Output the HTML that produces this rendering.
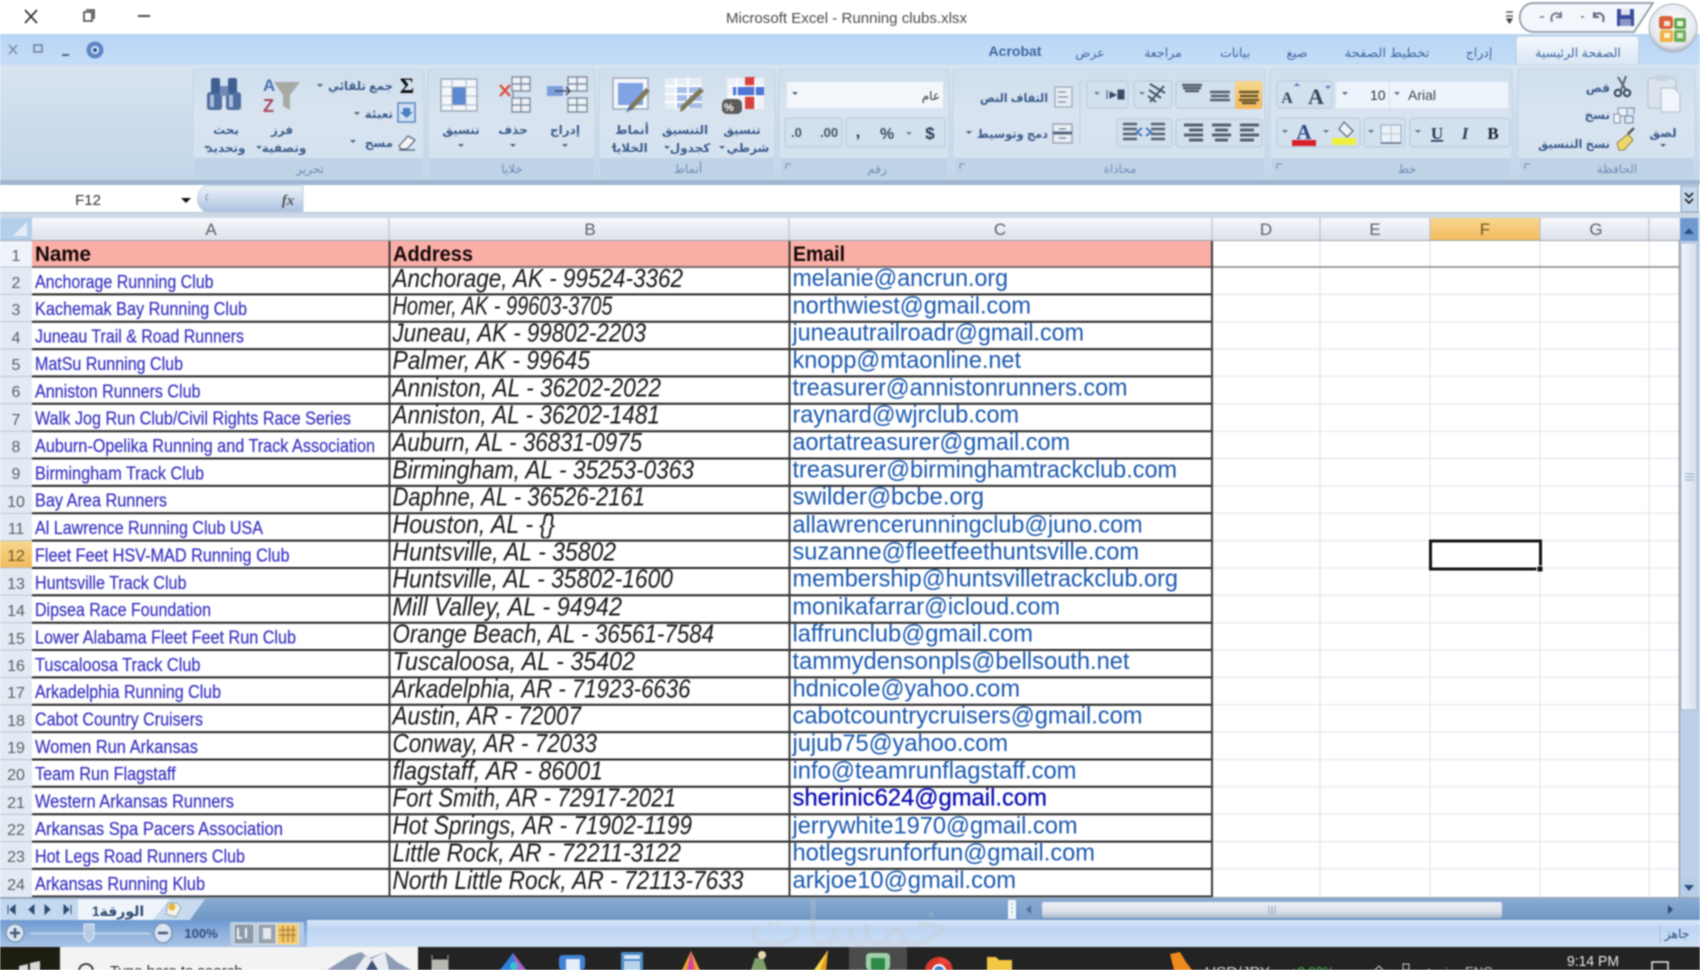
<!DOCTYPE html>
<html><head><meta charset="utf-8"><title>Microsoft Excel - Running clubs.xlsx</title>
<style>
html,body{margin:0;padding:0;background:#fff;width:1700px;height:970px;overflow:hidden}
svg{display:block;filter:blur(.7px)}
text{font-family:"Liberation Sans","DejaVu Sans",sans-serif}
.a{font-size:18.5px;fill:#3732c0;stroke:#3732c0;stroke-width:.2px}
.b{font-size:26px;font-style:italic;fill:#161616}
.c{font-size:24px;fill:#1a58ae}
.h{font-size:21px;font-weight:bold;fill:#120808}
.r{font-size:16px;fill:#5a5f66;text-anchor:middle}
.ch{font-size:17px;fill:#5c6168;text-anchor:middle}
.t{font-size:12px;fill:#3d5d8c;text-anchor:middle;font-weight:bold}
.l{font-size:12px;fill:#3d5d8c;text-anchor:end;font-weight:bold}
.g{font-size:12px;fill:#6f8db4;text-anchor:middle}
.tab{font-size:12.5px;fill:#3f67a0;text-anchor:middle}
.btn{fill:#d3e0ee;stroke:#b6cadf;stroke-width:1}
.grp{fill:url(#grp);stroke:#c2d5e8;stroke-width:1}
.lab{fill:#bfd3e7}
.d{fill:#55606e}
</style></head><body>
<svg width="1700" height="970" viewBox="0 0 1700 970" xmlns="http://www.w3.org/2000/svg">
<defs>
<linearGradient id="rib" x1="0" y1="0" x2="0" y2="1"><stop offset="0" stop-color="#dae4f0"/><stop offset=".5" stop-color="#cbdcec"/><stop offset="1" stop-color="#c3d6e9"/></linearGradient>
<linearGradient id="grp" x1="0" y1="0" x2="0" y2="1"><stop offset="0" stop-color="#cfdeed"/><stop offset=".4" stop-color="#d8e3ef"/><stop offset="1" stop-color="#d3e1f0"/></linearGradient>
<linearGradient id="strip" x1="0" y1="0" x2="0" y2="1"><stop offset="0" stop-color="#b7d5f5"/><stop offset="1" stop-color="#c5ddf7"/></linearGradient>
<linearGradient id="hdr" x1="0" y1="0" x2="0" y2="1"><stop offset="0" stop-color="#f6f8fb"/><stop offset="1" stop-color="#dbe0e8"/></linearGradient>
<linearGradient id="orange" x1="0" y1="0" x2="0" y2="1"><stop offset="0" stop-color="#f8d78e"/><stop offset="1" stop-color="#f3b95c"/></linearGradient>
<linearGradient id="status" x1="0" y1="0" x2="0" y2="1"><stop offset="0" stop-color="#dbe9fa"/><stop offset=".3" stop-color="#bcd5f3"/><stop offset="1" stop-color="#cfe0f6"/></linearGradient>
<linearGradient id="stat2" x1="0" y1="0" x2="0" y2="1"><stop offset="0" stop-color="#6d99d2"/><stop offset=".5" stop-color="#8eb0dc"/><stop offset="1" stop-color="#a9c4e6"/></linearGradient>
<linearGradient id="band" x1="0" y1="0" x2="0" y2="1"><stop offset="0" stop-color="#89acd5"/><stop offset="1" stop-color="#6f96c4"/></linearGradient>
<linearGradient id="thumb" x1="0" y1="0" x2="0" y2="1"><stop offset="0" stop-color="#eef1f6"/><stop offset=".6" stop-color="#d9dfe8"/><stop offset="1" stop-color="#aab8cb"/></linearGradient>
<linearGradient id="vthumb" x1="0" y1="0" x2="1" y2="0"><stop offset="0" stop-color="#f2f5fa"/><stop offset="1" stop-color="#d4e0ef"/></linearGradient>
<linearGradient id="fx" x1="0" y1="0" x2="0" y2="1"><stop offset="0" stop-color="#eef3fa"/><stop offset="1" stop-color="#a9c1df"/></linearGradient>
<linearGradient id="tabg" x1="0" y1="0" x2="0" y2="1"><stop offset="0" stop-color="#f4f8fd"/><stop offset="1" stop-color="#d9e6f4"/></linearGradient>
<radialGradient id="off" cx=".5" cy=".4" r=".6"><stop offset="0" stop-color="#fff"/><stop offset=".8" stop-color="#e4e8ee"/><stop offset="1" stop-color="#a9b2bf"/></radialGradient>
</defs>

<!-- title bar -->
<rect width="1700" height="34" fill="#fff"/>
<path d="M25 10L37 23M37 10L25 23" stroke="#333" stroke-width="1.7" fill="none"/>
<path d="M84 12h8v9h-8zM86 10h8v9" stroke="#444" stroke-width="1.6" fill="none"/>
<path d="M138 16h12" stroke="#333" stroke-width="1.8"/>
<text x="726" y="23" font-size="15" fill="#4a4a4a" textLength="241" lengthAdjust="spacingAndGlyphs">Microsoft Excel - Running clubs.xlsx</text>
<path d="M1506 12h7M1506 16h7M1507 19l2.500 4 2.500-4z" stroke="#444" stroke-width="1.200" fill="#444"/>
<path d="M1534 3H1653L1634 32H1534C1515 32 1515 3 1534 3Z" fill="#f3f6fa" stroke="#8d98a6" stroke-width="1.700"/>
<path d="M1540 17h4M1581 17h3" stroke="#6a7a90" stroke-width="1.600"/>
<path d="M1552 22c-3-9 6-11 9-6M1561 12v5h-5" fill="none" stroke="#6f7d8e" stroke-width="2"/>
<path d="M1603 22c3-9-6-11-9-6M1594 12v5h5" fill="none" stroke="#5a6a80" stroke-width="2"/>
<rect x="1617" y="9" width="17" height="17" fill="#3c4c9e"/><rect x="1621" y="9" width="9" height="6" fill="#dfe4f2"/><rect x="1620" y="19" width="11" height="7" fill="#8d97c6"/>

<!-- tab strip -->
<rect y="34" width="1700" height="31" fill="url(#strip)"/>
<path d="M9 45l8 9M17 45l-8 9" stroke="#7a8aa0" stroke-width="1.500"/>
<rect x="34" y="45" width="8" height="7" fill="none" stroke="#6e7f98" stroke-width="1.500"/>
<path d="M62 55h7" stroke="#55677f" stroke-width="2"/>
<circle cx="95" cy="50" r="8.500" fill="#5d86c4"/><circle cx="95" cy="50" r="4" fill="#dbe6f6"/><circle cx="95" cy="50" r="2" fill="#2b4f90"/>
<path d="M1516 65V40q0-4 4-4H1635q4 0 4 4V65Z" fill="url(#tabg)" stroke="#b3c9e0"/>
<text class="tab" x="1578" y="57">الصفحة الرئيسية</text>
<text class="tab" x="1479" y="57">إدراج</text>
<text class="tab" x="1387" y="57" textLength="85" lengthAdjust="spacingAndGlyphs">تخطيط الصفحة</text>
<text class="tab" x="1297" y="57">صيغ</text>
<text class="tab" x="1235" y="57">بيانات</text>
<text class="tab" x="1163" y="57">مراجعة</text>
<text class="tab" x="1090" y="57">عرض</text>
<text class="tab" x="1015" y="56" style="font-size:14px;font-weight:bold">Acrobat</text>

<!-- office button -->
<circle cx="1673" cy="28" r="24" fill="url(#off)" stroke="#a9b4c2"/>
<rect x="1659" y="16" width="14" height="13" rx="3" fill="#d9603a"/><rect x="1674" y="18" width="12" height="11" rx="2" fill="#5fa64c"/>
<rect x="1660" y="30" width="13" height="12" rx="2" fill="#eeb13e"/><rect x="1674" y="30" width="12" height="12" rx="2" fill="#6fae58"/>
<rect x="1664" y="21" width="6" height="5" fill="#f6e4d4"/><rect x="1677" y="21" width="6" height="5" fill="#e9f3dd"/><rect x="1664" y="33" width="6" height="5" fill="#fbf0cf"/><rect x="1677" y="33" width="6" height="5" fill="#d7ecd2"/>

<!-- ribbon -->
<rect y="65" width="1700" height="115" fill="url(#rib)"/>
<rect y="180" width="1700" height="5" fill="#9fb6cf"/>
<path d="M193 178V72q0-3 3-3H421q3 0 3 3V178Z" class="grp"/><rect class="lab" x="194" y="158" width="229" height="20"/>
<path d="M428 178V72q0-3 3-3H592q3 0 3 3V178Z" class="grp"/><rect class="lab" x="429" y="158" width="165" height="20"/>
<path d="M599 178V72q0-3 3-3H772q3 0 3 3V178Z" class="grp"/><rect class="lab" x="600" y="158" width="174" height="20"/>
<path d="M779 178V72q0-3 3-3H946q3 0 3 3V178Z" class="grp"/><rect class="lab" x="780" y="158" width="168" height="20"/>
<path d="M953 178V72q0-3 3-3H1262q3 0 3 3V178Z" class="grp"/><rect class="lab" x="954" y="158" width="310" height="20"/>
<path d="M1270 178V72q0-3 3-3H1509q3 0 3 3V178Z" class="grp"/><rect class="lab" x="1271" y="158" width="240" height="20"/>
<path d="M1518 178V72q0-3 3-3H1692q3 0 3 3V178Z" class="grp"/><rect class="lab" x="1519" y="158" width="175" height="20"/>

<text class="g" x="310" y="173">تحرير</text><text class="g" x="512" y="173">خلايا</text><text class="g" x="688" y="173">أنماط</text><text class="g" x="877" y="173">رقم</text><text class="g" x="1120" y="173">محاذاة</text><text class="g" x="1407" y="173">خط</text><text class="g" x="1617" y="173">الحافظة</text>
<path d="M786 169v-5h5M960 169v-5h5M1277 169v-5h5M1525 169v-5h5" fill="none" stroke="#7e97b6" stroke-width="1.200"/>

<!-- editing -->
<rect x="207" y="92" width="15" height="18" rx="3" fill="#4f6f9f"/><rect x="226" y="92" width="15" height="18" rx="3" fill="#4f6f9f"/>
<rect x="211" y="78" width="9" height="15" rx="2" fill="#3f5f90"/><rect x="228" y="78" width="9" height="15" rx="2" fill="#3f5f90"/><rect x="220" y="86" width="8" height="10" fill="#6f8cb4"/><rect x="210" y="95" width="4" height="12" fill="#a9c0de"/><rect x="229" y="95" width="4" height="12" fill="#a9c0de"/>
<text x="263" y="91" style="font-size:17px;font-weight:bold;fill:#4b74b2">A</text>
<text x="263" y="112" style="font-size:18px;font-weight:bold;fill:#a84a5c">Z</text>
<path d="M274 82H300L290 95V110L283 106V95Z" fill="#a7aaa4"/>
<text x="407" y="93" text-anchor="middle" style="font:bold 22px 'Liberation Serif',serif;fill:#111">Σ</text>
<text class="l" x="393" y="90" textLength="65" lengthAdjust="spacingAndGlyphs">جمع تلقائي</text><path d="M317 84l6 0-3 3z" fill="#4a5f80"/>
<rect x="398" y="103" width="17" height="19" fill="#cfe0f5" stroke="#5b87c0" stroke-width="1.500"/><path d="M403 108h7v4h3l-6.500 6-6.500-6h3z" fill="#4c7fc0"/>
<text class="l" x="393" y="118">تعبئة</text><path d="M354 112l6 0-3 3z" fill="#4a5f80"/>
<path d="M399 146l9-10 7 4-8 9h-6z" fill="#f4f4f4" stroke="#5d6f85" stroke-width="1.300"/><path d="M399 150h16" stroke="#4c5d73" stroke-width="1.200"/>
<text class="l" x="393" y="147">مسح</text><path d="M350 140l6 0-3 3z" fill="#4a5f80"/>
<text class="t" x="226" y="134">بحث</text><text class="t" x="226" y="152">وتحديد</text><path d="M204 146l6 0-3 3z" fill="#4a5f80"/>
<text class="t" x="282" y="134">فرز</text><text class="t" x="284" y="152">وتصفية</text><path d="M256 146l6 0-3 3z" fill="#4a5f80"/>

<!-- cells -->
<rect x="441" y="79" width="36" height="32" fill="#f3f6fa" stroke="#9aa9bb" stroke-width="1.500"/><rect x="452" y="87" width="14" height="18" fill="#5c88d0"/><path d="M441 87h36M441 96h11M466 96h11M441 105h36M452 79v32M466 79v32" stroke="#aab6c5"/>
<path d="M512 77h18v14h-18zM512 98h18v14h-18zM521 77v14M521 98v14M512 84h18M512 105h18M513 91v7" fill="#eef2f7" stroke="#7e8ea2" stroke-width="1.400"/><path d="M500 85l10 11M510 85l-10 11" stroke="#d8503d" stroke-width="2.400"/>
<path d="M568 77h19v14h-19zM568 98h19v14h-19zM577 77v14M577 98v14M568 84h19M568 105h19" fill="#eef2f7" stroke="#7e8ea2" stroke-width="1.400"/><rect x="547" y="86" width="16" height="10" fill="#7b9fdc"/><path d="M555 91h15m-4-4l4 4-4 4" stroke="#3c4c60" stroke-width="1.500" fill="none"/>
<text class="t" x="461" y="134">تنسيق</text><text class="t" x="513" y="134">حذف</text><text class="t" x="565" y="134">إدراج</text>
<path d="M458 144l6 0-3 3zM510 144l6 0-3 3zM562 144l6 0-3 3z" fill="#4a5f80"/>

<!-- styles -->
<rect x="613" y="78" width="35" height="31" fill="#f4f6f9" stroke="#9aa9bb" stroke-width="1.500"/><rect x="618" y="83" width="25" height="22" fill="#7fa3e6"/><path d="M650 91L632 110l-4 1 1-5 17-18z" fill="#7f7a5a"/><path d="M632 108l-6 5 3-7z" fill="#4e6ab8"/>
<rect x="665" y="78" width="37" height="31" fill="#e6edf7"/><rect x="676" y="86" width="26" height="22" fill="#a4bde8"/><path d="M665 86h37M665 94h37M665 102h37M676 78v31M688 78v31" stroke="#fff" stroke-width="2"/><path d="M704 91L684 110l-4 2 1-6 19-18z" fill="#7f7a5a"/>
<rect x="727" y="78" width="37" height="31" fill="#eef2f8"/><rect x="745" y="77" width="10" height="32" fill="#d8413b"/><rect x="733" y="87" width="31" height="9" fill="#4d76d6"/><path d="M727 86h37M727 96h37M737 78v31M755 78v31" stroke="#fff" stroke-width="1.500"/><rect x="722" y="99" width="20" height="15" rx="5" fill="#5b5b5b"/><text x="724" y="111" style="font-size:11px;font-weight:bold;fill:#fff">%</text>
<text class="t" x="632" y="134">أنماط</text><text class="t" x="630" y="152">الخلايا</text><path d="M611 146l6 0-3 3z" fill="#4a5f80"/>
<text class="t" x="685" y="134">التنسيق</text><text class="t" x="690" y="152">كجدول</text><path d="M664 146l6 0-3 3z" fill="#4a5f80"/>
<text class="t" x="742" y="134">تنسيق</text><text class="t" x="748" y="152">شرطي</text><path d="M719 146l6 0-3 3z" fill="#4a5f80"/>

<!-- number -->
<rect x="787" y="82" width="156" height="26" fill="#f3f7fc"/><path d="M792 92l6 0-3 3z" fill="#4a5f80"/>
<text class="l" x="940" y="100" style="fill:#333;font-weight:normal">عام</text>
<rect class="btn" x="785" y="118" width="57" height="29" rx="3"/><rect class="btn" x="846" y="118" width="99" height="29" rx="3"/>
<text x="791" y="137" style="font-size:13px;font-weight:bold;fill:#456">.0</text><text x="820" y="137" style="font-size:13px;font-weight:bold;fill:#456">.00</text>
<text x="858" y="137" text-anchor="middle" style="font-size:17px;font-weight:bold;fill:#2d3e55">,</text>
<text x="887" y="139" text-anchor="middle" style="font-size:16px;font-weight:bold;fill:#3a4d66">%</text>
<text x="930" y="139" text-anchor="middle" style="font-size:17px;font-weight:bold;fill:#2d3e55">$</text><path d="M906 132l6 0-3 3z" fill="#6a7f9c"/>

<!-- alignment -->
<text class="l" x="1048" y="102" textLength="68" lengthAdjust="spacingAndGlyphs">التفاف النص</text>
<rect x="1055" y="87" width="17" height="20" fill="#e8edf3" stroke="#97a6b8" stroke-width="1.200"/><path d="M1058 92h8M1058 97h10M1058 102h8" stroke="#6a7a8d"/>
<text class="l" x="1048" y="138" textLength="71" lengthAdjust="spacingAndGlyphs">دمج وتوسيط</text><path d="M966 131l6 0-3 3z" fill="#4a5f80"/>
<rect x="1053" y="124" width="19" height="19" fill="#e8edf3" stroke="#8b9aad" stroke-width="1.200"/><path d="M1053 133h19" stroke="#56677d" stroke-width="3"/><path d="M1059 129h7M1059 138h7" stroke="#56677d"/>
<path d="M1080 80V146" stroke="#bcd0e4"/>
<rect class="btn" x="1087" y="81" width="41" height="27" rx="3"/><rect class="btn" x="1134" y="81" width="38" height="27" rx="3"/><rect class="btn" x="1176" y="81" width="86" height="27" rx="3"/>
<rect class="btn" x="1117" y="119" width="55" height="28" rx="3"/><rect class="btn" x="1176" y="119" width="86" height="28" rx="3"/>
<rect x="1235" y="81" width="27" height="28" rx="2" fill="url(#orange)"/>
<path d="M1094 92l6 0-3 3z" fill="#6a7f9c"/><path d="M1107 90v9M1110 92l6 3-6 3zM1118 90h6v9h-6z" fill="#3a4d66" stroke="#3a4d66"/>
<path d="M1139 92l6 0-3 3z" fill="#6a7f9c"/><path d="M1150 84l15 9M1149 90l12 8M1148 96l8 6M1150 102l14-16" stroke="#46566a" stroke-width="2" fill="none"/>
<path d="M1182 85h20M1183 88h18M1185 91h14" stroke="#55606e" stroke-width="2.500"/>
<path d="M1210 92h20M1211 96h18M1210 100h20" stroke="#55606e" stroke-width="2.500"/>
<path d="M1239 92h20M1240 96h18M1239 100h20M1242 103h14" stroke="#6b5a2e" stroke-width="2.500"/>
<path d="M1123 124h14M1123 129h14M1123 134h14M1123 139h14M1151 124h14M1151 129h14M1151 134h14M1151 139h14" stroke="#55606e" stroke-width="2.500"/>
<path d="M1142 128l-5 4 5 4" fill="none" stroke="#3f76c4" stroke-width="2"/><path d="M1146 128l5 4-5 4" fill="none" stroke="#3f76c4" stroke-width="2"/>
<path d="M1184 125h19M1189 130h14M1184 135h19M1189 140h14" stroke="#55606e" stroke-width="3"/>
<path d="M1212 125h19M1215 130h13M1212 135h19M1215 140h13" stroke="#55606e" stroke-width="3"/>
<path d="M1240 125h19M1240 130h14M1240 135h19M1240 140h14" stroke="#55606e" stroke-width="3"/>

<!-- font -->
<rect class="btn" x="1277" y="81" width="55" height="27" rx="3"/>
<text x="1287" y="103" text-anchor="middle" style="font:bold 16px 'Liberation Serif',serif;fill:#33465f">A</text><path d="M1294 86l3-3 3 3z" fill="#4f79b8"/>
<text x="1316" y="104" text-anchor="middle" style="font:bold 22px 'Liberation Serif',serif;fill:#33465f">A</text><path d="M1325 86l3 3 3-3z" fill="#4f79b8"/>
<rect x="1336" y="82" width="53" height="26" fill="#eef4fb"/><rect x="1390" y="82" width="118" height="26" fill="#eef4fb"/>
<path d="M1342 92l6 0-3 3zM1394 92l6 0-3 3z" fill="#556a88"/>
<text x="1370" y="100" style="font-size:14px;fill:#333">10</text><text x="1408" y="100" style="font-size:14px;fill:#3d4652" textLength="28" lengthAdjust="spacingAndGlyphs">Arial</text>
<rect class="btn" x="1277" y="118" width="83" height="29" rx="3"/><rect class="btn" x="1364" y="118" width="41" height="29" rx="3"/><rect class="btn" x="1410" y="118" width="100" height="29" rx="3"/>
<path d="M1282 130l6 0-3 3zM1323 130l6 0-3 3zM1368 130l6 0-3 3zM1415 130l6 0-3 3z" fill="#5f748f"/>
<text x="1304" y="139" text-anchor="middle" style="font:bold 21px 'Liberation Serif',serif;fill:#2c4a86">A</text><rect x="1292" y="140" width="24" height="6" fill="#d6202b"/>
<path d="M1344 122l9 9-6 6-8-8z" fill="#eef1f5" stroke="#5f6e80" stroke-width="1.300"/><rect x="1332" y="138" width="24" height="7" fill="#f1ef3c"/>
<rect x="1381" y="125" width="20" height="18" fill="#eaf0f7" stroke="#96a6ba"/><path d="M1391 125v18M1381 134h20" stroke="#b8c5d5"/><path d="M1381 143h20" stroke="#596a80" stroke-width="1.500"/>
<text x="1437" y="139" text-anchor="middle" style="font:bold 17px 'Liberation Serif',serif;fill:#2a3c57;text-decoration:underline">U</text>
<text x="1465" y="139" text-anchor="middle" style="font:italic bold 17px 'Liberation Serif',serif;fill:#2a3c57">I</text>
<text x="1493" y="139" text-anchor="middle" style="font:bold 17px 'Liberation Serif',serif;fill:#18212e">B</text>

<!-- clipboard -->
<rect x="1648" y="78" width="28" height="30" rx="3" fill="#dbe4ee" stroke="#b7c4d3" stroke-width="1.300"/><rect x="1655" y="75" width="14" height="6" rx="2" fill="#c9d4e0"/><path d="M1661 88h13l6 6v18h-19z" fill="#f1f5f9" stroke="#b9c6d5" stroke-width="1.300"/>
<text class="t" x="1663" y="137">لصق</text><path d="M1660 144l6 0-3 3z" fill="#4a5f80"/>
<path d="M1618 77l8 13M1626 76l-5 14" stroke="#5c6675" stroke-width="2"/><circle cx="1618" cy="93" r="3.200" fill="none" stroke="#33435c" stroke-width="2"/><circle cx="1627" cy="93" r="3.200" fill="none" stroke="#33435c" stroke-width="2"/>
<text class="l" x="1610" y="92">قص</text>
<path d="M1618 108h9v8h-9z" fill="#e8eef7" stroke="#7d8ea5"/><path d="M1625 116h8v7h-8zM1628 108h6v6" fill="#dde8f5" stroke="#5e7fa9"/><path d="M1614 114h6v9h-6z" fill="#eef3f9" stroke="#7c8ea6"/>
<text class="l" x="1610" y="119">نسخ</text>
<path d="M1617 143l11-9 5 6-9 10h-5z" fill="#ecd76c" stroke="#8b8042"/><path d="M1628 134l6-6" stroke="#555" stroke-width="2.500"/>
<text class="l" x="1610" y="148" textLength="72" lengthAdjust="spacingAndGlyphs">نسخ التنسيق</text>

<!-- formula bar -->
<rect y="185" width="1700" height="27" fill="#fff"/><rect y="212" width="1700" height="6" fill="#cdd9e6"/><path d="M0 212.500H1700" stroke="#b4c4d6"/>
<text x="88" y="205" text-anchor="middle" style="font-size:15px;fill:#333">F12</text>
<path d="M181 198h10l-5 5z" fill="#111"/>
<path d="M205 186H303V212H205C195 205 195 192 205 186Z" fill="url(#fx)" stroke="#c2cfdf"/>
<text x="288" y="205" text-anchor="middle" style="font:italic bold 15px 'Liberation Serif',serif;fill:#555">fx</text>
<path d="M208 194q-4 3 0 7" fill="none" stroke="#8ea0b6" stroke-width="1.200"/>
<rect x="1681" y="186" width="17" height="26" fill="#c6d8eb" stroke="#8ba4c0"/><path d="M1685 193l4 4 4-4M1685 199l4 4 4-4" fill="none" stroke="#222" stroke-width="1.600"/>

<!-- sheet header -->
<rect y="218" width="1680" height="23" fill="url(#hdr)"/>
<rect y="218" width="32" height="23" fill="#b4cfec"/><path d="M27 222V236H13Z" fill="#e3edf8"/>
<rect x="1430" y="218" width="110" height="23" fill="url(#orange)"/>
<path d="M389 218v23M789 218v23M1212 218v23M1320 218v23M1430 218v23M1540 218v23M1649 218v23" stroke="#b6bcc6"/>
<path d="M0 240.500H1680" stroke="#9aa5b2"/>
<text class="ch" x="211" y="235">A</text><text class="ch" x="590" y="235">B</text><text class="ch" x="1000" y="235">C</text><text class="ch" x="1266" y="235">D</text><text class="ch" x="1375" y="235">E</text><text class="ch" x="1485" y="235" style="fill:#6b5a2c">F</text><text class="ch" x="1596" y="235">G</text>

<!-- row header -->
<rect y="241" width="32" height="656" fill="#e3eaf3"/>
<rect y="241" width="32" height="26" fill="#eef3f9"/>
<rect y="540.600" width="32" height="27.400" fill="url(#orange)"/>
<path d="M0 267H32M0 294.400H32M0 321.700H32M0 349.100H32M0 376.400H32M0 403.800H32M0 431.200H32M0 458.500H32M0 485.900H32M0 513.200H32M0 540.600H32M0 568H32M0 595.300H32M0 622.700H32M0 650H32M0 677.400H32M0 704.800H32M0 732.100H32M0 759.500H32M0 786.800H32M0 814.200H32M0 841.600H32M0 868.900H32" stroke="#b9c5d4"/>
<text class="r" x="16" y="261">1</text><text class="r" x="16" y="288">2</text><text class="r" x="16" y="315">3</text><text class="r" x="16" y="343">4</text><text class="r" x="16" y="370">5</text><text class="r" x="16" y="397">6</text><text class="r" x="16" y="425">7</text><text class="r" x="16" y="452">8</text><text class="r" x="16" y="479">9</text><text class="r" x="16" y="507">10</text><text class="r" x="16" y="534">11</text><text class="r" x="16" y="561" style="fill:#6b5a2c">12</text><text class="r" x="16" y="589">13</text><text class="r" x="16" y="616">14</text><text class="r" x="16" y="644">15</text><text class="r" x="16" y="671">16</text><text class="r" x="16" y="698">17</text><text class="r" x="16" y="726">18</text><text class="r" x="16" y="753">19</text><text class="r" x="16" y="780">20</text><text class="r" x="16" y="808">21</text><text class="r" x="16" y="835">22</text><text class="r" x="16" y="862">23</text><text class="r" x="16" y="890">24</text>

<!-- grid -->
<rect x="32" y="241" width="1180" height="26" fill="#fbaea6"/>
<path d="M1320 241V897M1430 241V897M1540 241V897M1649 241V897" stroke="#dfe2e8"/>
<path d="M1212 294.400H1680M1212 321.700H1680M1212 349.100H1680M1212 376.400H1680M1212 403.800H1680M1212 431.200H1680M1212 458.500H1680M1212 485.900H1680M1212 513.200H1680M1212 540.600H1680M1212 568H1680M1212 595.300H1680M1212 622.700H1680M1212 650H1680M1212 677.400H1680M1212 704.800H1680M1212 732.100H1680M1212 759.500H1680M1212 786.800H1680M1212 814.200H1680M1212 841.600H1680M1212 868.900H1680" stroke="#e0e3e9"/>
<path d="M1212 267H1680" stroke="#a59c9c" stroke-width="2"/>
<path d="M32 267H1212" stroke="#7a6a6a" stroke-width="2"/>
<path d="M32 294.400H1212M32 321.700H1212M32 349.100H1212M32 376.400H1212M32 403.800H1212M32 431.200H1212M32 458.500H1212M32 485.900H1212M32 513.200H1212M32 540.600H1212M32 568H1212M32 595.300H1212M32 622.700H1212M32 650H1212M32 677.400H1212M32 704.800H1212M32 732.100H1212M32 759.500H1212M32 786.800H1212M32 814.200H1212M32 841.600H1212M32 868.900H1212M32 896.500H1212" stroke="#222" stroke-width="2"/>
<path d="M389.500 241V897M789.500 241V897M1212 241V897" stroke="#3a3a3a" stroke-width="2"/>
<path d="M1679.500 241V897" stroke="#8a94a0" stroke-width="1.500"/>

<text class="h" x="35" y="261" textLength="56" lengthAdjust="spacingAndGlyphs">Name</text><text class="h" x="393" y="261" textLength="80" lengthAdjust="spacingAndGlyphs">Address</text><text class="h" x="793" y="261" textLength="52" lengthAdjust="spacingAndGlyphs">Email</text>

<text class="a" x="35" y="288" textLength="178.500" lengthAdjust="spacingAndGlyphs">Anchorage Running Club</text>
<text class="a" x="35" y="315" textLength="212" lengthAdjust="spacingAndGlyphs">Kachemak Bay Running Club</text>
<text class="a" x="35" y="342.600" textLength="209" lengthAdjust="spacingAndGlyphs">Juneau Trail &amp; Road Runners</text>
<text class="a" x="35" y="370" textLength="148" lengthAdjust="spacingAndGlyphs">MatSu Running Club</text>
<text class="a" x="35" y="397.300" textLength="165.500" lengthAdjust="spacingAndGlyphs">Anniston Runners Club</text>
<text class="a" x="35" y="424.700" textLength="316" lengthAdjust="spacingAndGlyphs">Walk Jog Run Club/Civil Rights Race Series</text>
<text class="a" x="35" y="452" textLength="340" lengthAdjust="spacingAndGlyphs">Auburn-Opelika Running and Track Association</text>
<text class="a" x="35" y="479.400" textLength="169" lengthAdjust="spacingAndGlyphs">Birmingham Track Club</text>
<text class="a" x="35" y="506.700" textLength="132" lengthAdjust="spacingAndGlyphs">Bay Area Runners</text>
<text class="a" x="35" y="534" textLength="228" lengthAdjust="spacingAndGlyphs">Al Lawrence Running Club USA</text>
<text class="a" x="35" y="561.500" textLength="254.500" lengthAdjust="spacingAndGlyphs">Fleet Feet HSV-MAD Running Club</text>
<text class="a" x="35" y="588.800" textLength="151.500" lengthAdjust="spacingAndGlyphs">Huntsville Track Club</text>
<text class="a" x="35" y="616" textLength="176" lengthAdjust="spacingAndGlyphs">Dipsea Race Foundation</text>
<text class="a" x="35" y="643.500" textLength="261" lengthAdjust="spacingAndGlyphs">Lower Alabama Fleet Feet Run Club</text>
<text class="a" x="35" y="671" textLength="165.500" lengthAdjust="spacingAndGlyphs">Tuscaloosa Track Club</text>
<text class="a" x="35" y="698" textLength="186" lengthAdjust="spacingAndGlyphs">Arkadelphia Running Club</text>
<text class="a" x="35" y="725.600" textLength="168" lengthAdjust="spacingAndGlyphs">Cabot Country Cruisers</text>
<text class="a" x="35" y="753" textLength="163" lengthAdjust="spacingAndGlyphs">Women Run Arkansas</text>
<text class="a" x="35" y="780" textLength="140.600" lengthAdjust="spacingAndGlyphs">Team Run Flagstaff</text>
<text class="a" x="35" y="807.700" textLength="199" lengthAdjust="spacingAndGlyphs">Western Arkansas Runners</text>
<text class="a" x="35" y="835" textLength="248" lengthAdjust="spacingAndGlyphs">Arkansas Spa Pacers Association</text>
<text class="a" x="35" y="862.400" textLength="210" lengthAdjust="spacingAndGlyphs">Hot Legs Road Runners Club</text>
<text class="a" x="35" y="889.800" textLength="170" lengthAdjust="spacingAndGlyphs">Arkansas Running Klub</text>

<g transform="translate(0,.6)">
<text class="b" x="392.500" y="286.400" textLength="290.500" lengthAdjust="spacingAndGlyphs">Anchorage, AK - 99524-3362</text>
<text class="b" x="392.500" y="313.700" textLength="220" lengthAdjust="spacingAndGlyphs">Homer, AK - 99603-3705</text>
<text class="b" x="392.500" y="341" textLength="253.500" lengthAdjust="spacingAndGlyphs">Juneau, AK - 99802-2203</text>
<text class="b" x="392.500" y="368.400" textLength="197.500" lengthAdjust="spacingAndGlyphs">Palmer, AK - 99645</text>
<text class="b" x="392.500" y="395.800" textLength="268.500" lengthAdjust="spacingAndGlyphs">Anniston, AL - 36202-2022</text>
<text class="b" x="392.500" y="423" textLength="267.500" lengthAdjust="spacingAndGlyphs">Anniston, AL - 36202-1481</text>
<text class="b" x="392.500" y="450.500" textLength="249.500" lengthAdjust="spacingAndGlyphs">Auburn, AL - 36831-0975</text>
<text class="b" x="392.500" y="478" textLength="301.500" lengthAdjust="spacingAndGlyphs">Birmingham, AL - 35253-0363</text>
<text class="b" x="392.500" y="505" textLength="252.500" lengthAdjust="spacingAndGlyphs">Daphne, AL - 36526-2161</text>
<text class="b" x="392.500" y="532.600" textLength="162.500" lengthAdjust="spacingAndGlyphs">Houston, AL - {}</text>
<text class="b" x="392.500" y="560" textLength="223.500" lengthAdjust="spacingAndGlyphs">Huntsville, AL - 35802</text>
<text class="b" x="392.500" y="587" textLength="280.500" lengthAdjust="spacingAndGlyphs">Huntsville, AL - 35802-1600</text>
<text class="b" x="392.500" y="614.700" textLength="229.500" lengthAdjust="spacingAndGlyphs">Mill Valley, AL - 94942</text>
<text class="b" x="392.500" y="642" textLength="321.500" lengthAdjust="spacingAndGlyphs">Orange Beach, AL - 36561-7584</text>
<text class="b" x="392.500" y="669.400" textLength="242.500" lengthAdjust="spacingAndGlyphs">Tuscaloosa, AL - 35402</text>
<text class="b" x="392.500" y="696.800" textLength="298" lengthAdjust="spacingAndGlyphs">Arkadelphia, AR - 71923-6636</text>
<text class="b" x="392.500" y="724" textLength="188.500" lengthAdjust="spacingAndGlyphs">Austin, AR - 72007</text>
<text class="b" x="392.500" y="751.500" textLength="204.500" lengthAdjust="spacingAndGlyphs">Conway, AR - 72033</text>
<text class="b" x="392.500" y="778.800" textLength="210.500" lengthAdjust="spacingAndGlyphs">flagstaff, AR - 86001</text>
<text class="b" x="392.500" y="806" textLength="283.500" lengthAdjust="spacingAndGlyphs">Fort Smith, AR - 72917-2021</text>
<text class="b" x="392.500" y="833.600" textLength="299.500" lengthAdjust="spacingAndGlyphs">Hot Springs, AR - 71902-1199</text>
<text class="b" x="392.500" y="861" textLength="288.500" lengthAdjust="spacingAndGlyphs">Little Rock, AR - 72211-3122</text>
<text class="b" x="392.500" y="888.300" textLength="351" lengthAdjust="spacingAndGlyphs">North Little Rock, AR - 72113-7633</text>
</g>

<g transform="translate(0,.7)">
<text class="c" x="792.500" y="285.400" textLength="215.500" lengthAdjust="spacingAndGlyphs">melanie@ancrun.org</text>
<text class="c" x="792.500" y="312.700" textLength="238.500" lengthAdjust="spacingAndGlyphs">northwiest@gmail.com</text>
<text class="c" x="792.500" y="340" textLength="291.500" lengthAdjust="spacingAndGlyphs">juneautrailroadr@gmail.com</text>
<text class="c" x="792.500" y="367.400" textLength="228.500" lengthAdjust="spacingAndGlyphs">knopp@mtaonline.net</text>
<text class="c" x="792.500" y="394.800" textLength="335" lengthAdjust="spacingAndGlyphs">treasurer@annistonrunners.com</text>
<text class="c" x="792.500" y="422" textLength="226.500" lengthAdjust="spacingAndGlyphs">raynard@wjrclub.com</text>
<text class="c" x="792.500" y="449.500" textLength="277.500" lengthAdjust="spacingAndGlyphs">aortatreasurer@gmail.com</text>
<text class="c" x="792.500" y="477" textLength="384.500" lengthAdjust="spacingAndGlyphs">treasurer@birminghamtrackclub.com</text>
<text class="c" x="792.500" y="504" textLength="191.500" lengthAdjust="spacingAndGlyphs">swilder@bcbe.org</text>
<text class="c" x="792.500" y="531.600" textLength="350" lengthAdjust="spacingAndGlyphs">allawrencerunningclub@juno.com</text>
<text class="c" x="792.500" y="559" textLength="346.500" lengthAdjust="spacingAndGlyphs">suzanne@fleetfeethuntsville.com</text>
<text class="c" x="792.500" y="586" textLength="385.500" lengthAdjust="spacingAndGlyphs">membership@huntsvilletrackclub.org</text>
<text class="c" x="792.500" y="613.700" textLength="267.500" lengthAdjust="spacingAndGlyphs">monikafarrar@icloud.com</text>
<text class="c" x="792.500" y="641" textLength="240.500" lengthAdjust="spacingAndGlyphs">laffrunclub@gmail.com</text>
<text class="c" x="792.500" y="668.400" textLength="337" lengthAdjust="spacingAndGlyphs">tammydensonpls@bellsouth.net</text>
<text class="c" x="792.500" y="695.800" textLength="227.500" lengthAdjust="spacingAndGlyphs">hdnicole@yahoo.com</text>
<text class="c" x="792.500" y="723" textLength="350" lengthAdjust="spacingAndGlyphs">cabotcountrycruisers@gmail.com</text>
<text class="c" x="792.500" y="750.500" textLength="215.500" lengthAdjust="spacingAndGlyphs">jujub75@yahoo.com</text>
<text class="c" x="792.500" y="777.800" textLength="284" lengthAdjust="spacingAndGlyphs">info@teamrunflagstaff.com</text>
<text class="c" x="792.500" y="805" textLength="254.500" lengthAdjust="spacingAndGlyphs" style="fill:#0c0cb4;stroke:#0c0cb4;stroke-width:.3px">sherinic624@gmail.com</text>
<text class="c" x="792.500" y="832.600" textLength="285" lengthAdjust="spacingAndGlyphs">jerrywhite1970@gmail.com</text>
<text class="c" x="792.500" y="860" textLength="302.500" lengthAdjust="spacingAndGlyphs">hotlegsrunforfun@gmail.com</text>
<text class="c" x="792.500" y="887.300" textLength="223.500" lengthAdjust="spacingAndGlyphs">arkjoe10@gmail.com</text>
</g>

<!-- active cell -->
<rect x="1430.500" y="541" width="110" height="28" fill="none" stroke="#111" stroke-width="3"/><rect x="1537" y="566" width="6" height="6" fill="#111" stroke="#fff"/>

<!-- v scrollbar -->
<rect x="1680" y="218" width="20" height="681" fill="#bcd1e8"/>
<rect x="1680" y="218" width="18" height="23" fill="#6f9ad0"/><path d="M1684 234l5-6 5 6z" fill="#2a4f85"/>
<rect x="1681" y="243" width="16" height="467" fill="url(#vthumb)" stroke="#a3b9d2"/><path d="M1685 474h9M1685 477h9M1685 480h9" stroke="#99aac0"/>
<rect x="1680" y="878" width="18" height="20" fill="#b7cde6"/><path d="M1684 885l5 6 5-6z" fill="#2a4f85"/>

<!-- sheet tabs band -->
<rect y="897" width="1700" height="23" fill="url(#band)"/>
<path d="M0 898H1700" stroke="#9aa6b4" stroke-width="1.500"/>
<rect y="899" width="78" height="21" fill="#c4d9f0"/>
<path d="M8 905v9M15 905l-5 4.500 5 4.500zM34 905l-5 4.500 5 4.500zM45 905l5 4.500-5 4.500zM64 905l5 4.500-5 4.500zM71 905v9" fill="#2e4a72" stroke="#2e4a72"/>
<path d="M78 899H170L153 920H78Z" fill="#eff4fb"/>
<text x="118" y="916" text-anchor="middle" style="font-size:14px;font-weight:bold;fill:#2e4a72">الورقة1</text>
<path d="M170 899H205L190 920H153Z" fill="#c7daef"/>
<path d="M168 903l9 0 4 5-5 9-10-3z" fill="#f7f3e4" stroke="#91a4ba"/><circle cx="172" cy="907" r="3.500" fill="#e5b43c"/>
<rect x="1008" y="900" width="8" height="19" fill="#f2f6fb"/><path d="M1012 903v13" stroke="#8ca2bd" stroke-dasharray="2 2"/>
<path d="M1031 905l-5 4.500 5 4.500z" fill="#2e4a72"/><rect x="1020" y="900" width="20" height="19" fill="#89a8cc" opacity=".4"/>
<rect x="1042" y="902" width="460" height="16" rx="2" fill="url(#thumb)"/><path d="M1269 906v8M1272 906v8M1275 906v8" stroke="#93a4ba"/>
<path d="M1668 905l5 4.500-5 4.500z" fill="#2e4a72"/>

<!-- status bar -->
<rect y="920" width="1700" height="27" fill="url(#status)"/>
<rect y="920" width="307" height="27" fill="url(#stat2)"/>
<path d="M30 933.500H150" stroke="#cbdcf0" stroke-width="1.500"/>
<circle cx="15" cy="933" r="9" fill="#d9e5f3" stroke="#7d94b2" stroke-width="1.500"/><path d="M10 933h10M15 928v10" stroke="#45597a" stroke-width="2.500"/>
<path d="M84 924h10v13l-5 5-5-5z" fill="#b7cce6" stroke="#e5eefa"/>
<ellipse cx="163" cy="933" rx="9" ry="10" fill="#d9e5f3" stroke="#7d94b2" stroke-width="1.500"/><path d="M158 933h10" stroke="#45597a" stroke-width="2.500"/>
<text x="201" y="938" text-anchor="middle" style="font-size:13px;font-weight:bold;fill:#2f4f84">100%</text>
<rect x="230" y="922" width="74" height="24" fill="#b7cbe2"/>
<rect x="234" y="924" width="20" height="20" fill="#8e9aa8" stroke="#dfe7f0"/><path d="M238 928v10h4M246 928v10" stroke="#f2f4f7" stroke-width="2" fill="none"/>
<rect x="258" y="924" width="18" height="20" fill="#98a3b0" stroke="#dfe7f0"/><rect x="263" y="928" width="8" height="11" fill="#e6e9ee"/>
<rect x="277" y="924" width="21" height="20" fill="#f2c86a" stroke="#f8e3a9"/><path d="M279 930h17M279 935h17M283 926v16M288 926v16M293 926v16" stroke="#a87f3a" stroke-width="1.200"/>
<path d="M1660 925v19" stroke="#a9c1dc"/>
<text x="1677" y="938" text-anchor="middle" style="font-size:12.500px;fill:#2f4f84">جاهز</text>

<!-- watermark -->
<text x="747" y="946" textLength="204" lengthAdjust="spacingAndGlyphs" style="font-size:62px;font-family:'DejaVu Sans',sans-serif;fill:#c8c8c8;fill-opacity:.28">خمسات</text>

<!-- taskbar -->
<rect y="947" width="1700" height="23" fill="#232323"/>
<rect y="947" width="60" height="23" fill="#1d1d12"/>
<rect x="60" y="947" width="358" height="23" fill="#f3f3f3"/>
<path d="M19 966l9-2v6h-9zM30 963l10-2v9H30z" fill="#d8d8d8"/>
<circle cx="86" cy="971" r="7" fill="none" stroke="#333" stroke-width="1.800"/>
<text x="110" y="976" style="font-size:15px;fill:#333">Type here to search</text>
<path d="M327 970l22-14 12-4 8 6 16-6 12 10 14 8z" fill="#8e9db5"/><path d="M355 970l10-14 6 3 14-7 4 18z" fill="#e8ecf2"/><path d="M366 970l6-10 6 10z" fill="#3c507a"/>
<rect x="849" y="947" width="58" height="23" fill="#4b4b4b"/>
<path d="M432 959v-4M448 959v-4M432 960h16v10h-16z" fill="#b8b8b0" stroke="#b8b8b0"/>
<path d="M513 953l13 17h-26z" fill="#2e7fe0"/><path d="M513 953l13 17h-10z" fill="#a85fc8"/><circle cx="514" cy="966" r="4" fill="#3cc0c8"/>
<rect x="559" y="955" width="26" height="15" rx="4" fill="#3f82d6"/><rect x="566" y="959" width="14" height="11" fill="#e4eef8"/>
<rect x="621" y="952" width="22" height="18" rx="2" fill="#4d8dc8"/><rect x="624" y="955" width="16" height="4" fill="#d8e6f3"/><rect x="624" y="961" width="16" height="9" fill="#b9d4ea"/>
<path d="M691 951l9 19h-18z" fill="#f0a030"/><path d="M691 951l4 19h-8z" fill="#d4489a"/>
<path d="M755 958h8l4 12h-16z" fill="#7f9d6a"/><circle cx="762" cy="955" r="4" fill="#e8d8b0"/>
<path d="M828 950l-14 20h12z" fill="#f7d648"/><path d="M828 950l-2 20h-6z" fill="#e89a20"/>
<rect x="866" y="953" width="24" height="17" rx="4" fill="#9fd0a8"/><rect x="871" y="958" width="14" height="12" fill="#2f8a4a"/>
<circle cx="939" cy="971" r="14" fill="#d8382c"/><path d="M939 957a14 14 0 0 1 12 7h-12z" fill="#e8463a"/><circle cx="939" cy="971" r="6" fill="#3c78d8" stroke="#fff" stroke-width="2"/>
<path d="M987 957h9l3 3h13v10h-25z" fill="#f2c744"/>
<path d="M1170 954l10-2 6 10 6 8h-18z" fill="#ef8a1c"/>
<text x="1205" y="976" textLength="65" lengthAdjust="spacingAndGlyphs" style="font-size:13px;fill:#ddd">USD/JPY</text>
<text x="1290" y="976" style="font-size:13px;fill:#3ab84a">+0.03%</text>
<path d="M1375 970l4-4 4 4" fill="none" stroke="#ccc"/>
<rect x="1403" y="964" width="6" height="6" fill="none" stroke="#ccc"/>
<text x="1425" y="976" style="font-size:13px;fill:#bbb">ف ع</text><text x="1465" y="976" style="font-size:13px;fill:#bbb">ENG</text>
<text x="1593" y="966" text-anchor="middle" textLength="52" lengthAdjust="spacingAndGlyphs" style="font-size:15px;fill:#e8e8e8">9:14 PM</text>
<rect x="1652" y="962" width="16" height="10" fill="none" stroke="#e8e8e8" stroke-width="1.500"/>
</svg>
</body></html>
